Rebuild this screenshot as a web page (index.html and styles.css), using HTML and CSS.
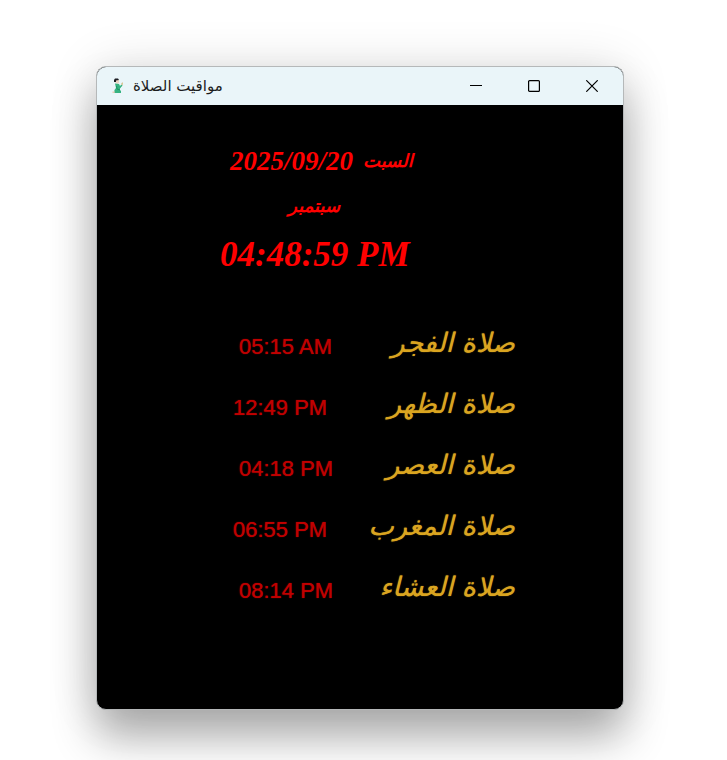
FILE: index.html
```html
<!DOCTYPE html>
<html lang="ar">
<head>
<meta charset="utf-8">
<title>مواقيت الصلاة</title>
<link rel="stylesheet" href="styles.css">
</head>
<body>
<main class="window">
  <header class="titlebar">
    <svg class="app-icon" viewBox="0 0 14 16" aria-hidden="true">
      <path d="M4 2H8V5L6 6L4 4Z" fill="#f0d5c5"/>
      <path d="M3 2L4 .5H7L8 2L5 2.500V4H3Z" fill="#1c1c22"/>
      <path d="M4 5.500L8 6L9 8L10.500 6.500L11.500 7.500L9 10.500V12L10 13V15H3L3.500 12L5 10Z" fill="#35b381"/>
      <path d="M10 6L11.500 4L12 5.500L11.500 7.500Z" fill="#d6c18d"/>
      <path d="M1.500 13.500H4L3.500 15H1.500Z" fill="#e8cbb4"/>
      <path d="M5.500 8L6 11L9 12" fill="none" stroke="#249266"/>
    </svg>
    <h1 class="title" dir="rtl">مواقيت الصلاة</h1>
    <div class="controls">
      <button class="control" type="button" aria-label="تصغير"><svg viewBox="0 0 12 12"><path d="M0 5.500H12"/></svg></button>
      <button class="control" type="button" aria-label="تكبير"><svg viewBox="0 0 12 12"><rect x=".6" y=".6" width="10.800" height="10.800" rx="1"/></svg></button>
      <button class="control" type="button" aria-label="إغلاق"><svg viewBox="0 0 12 12"><path d="M.3.3L11.700 11.700M11.700.3L.3 11.700"/></svg></button>
    </div>
  </header>
  <div class="content">
    <section class="clock">
      <p class="date"><span>2025/09/20</span><span class="word" dir="rtl">السبت</span></p>
      <p class="month word" dir="rtl">سبتمبر</p>
      <p class="time">04:48:59 PM</p>
    </section>
    <table class="prayers">
      <tbody>
        <tr><td>05:15 AM</td><th scope="row" dir="rtl">صلاة الفجر</th></tr>
        <tr><td>12:49 PM</td><th scope="row" dir="rtl">صلاة الظهر</th></tr>
        <tr><td>04:18 PM</td><th scope="row" dir="rtl">صلاة العصر</th></tr>
        <tr><td>06:55 PM</td><th scope="row" dir="rtl">صلاة المغرب</th></tr>
        <tr><td>08:14 PM</td><th scope="row" dir="rtl">صلاة العشاء</th></tr>
      </tbody>
    </table>
  </div>
</main>
</body>
</html>
```
FILE: styles.css
```css
* { box-sizing: border-box; }
body {
  margin: 0;
  min-height: 100vh;
  padding: 66px 103px 50px 96px;
  display: flex;
  background: #fff;
  overflow: hidden;
}
.window {
  flex: 1;
  display: flex;
  flex-direction: column;
  border: 1px solid #b5b8b9;
  border-radius: 10px;
  overflow: hidden;
  background: #000;
  box-shadow: 0 0 50px rgba(0, 0, 0, .12), 0 28px 44px rgba(0, 0, 0, .3);
}
.titlebar {
  height: 38px;
  padding: 0 2px 0 14px;
  display: flex;
  align-items: center;
  background: #eaf5f9;
  color: #1c1c1c;
}
.app-icon { width: 14px; height: 16px; }
.title {
  margin: 0 auto 0 8px;
  font: 400 15px/20px "DejaVu Sans", sans-serif;
}
.controls { display: flex; height: 100%; }
.control {
  width: 58px;
  padding: 0;
  border: 0;
  background: none;
  display: grid;
  place-items: center;
}
.control svg {
  width: 12px;
  height: 12px;
  fill: none;
  stroke: #000;
  stroke-width: 1.2;
}
.content { padding: 36px 108px 0 123px; }
.clock {
  color: #f00;
  font: italic 700 27px/40px "Liberation Serif", "DejaVu Sans", serif;
}
.clock p { margin: 0; }
.date { display: flex; gap: 10px; padding-left: 10px; }
.word { font-family: "DejaVu Sans", sans-serif; font-size: 18px; }
.clock .month { width: 120px; line-height: 50px; }
.clock .time { font-size: 35px; line-height: 48px; }
.prayers {
  width: 100%;
  margin-top: 35px;
  border-collapse: collapse;
}
.prayers tr { height: 61px; }
.prayers td {
  padding: 4px 0 0 19px;
  color: #c00000;
  font: 400 22px/28px "Liberation Sans", sans-serif;
  text-shadow: 0 0 1px #c00000;
}
.prayers tr:nth-child(even) td { padding-left: 13px; }
.prayers th {
  padding: 0 0 4px;
  text-align: start;
  white-space: nowrap;
  color: #daa520;
  font: italic 400 27px/40px "DejaVu Sans", sans-serif;
  text-shadow: 0 0 1px #daa520;
}
```
